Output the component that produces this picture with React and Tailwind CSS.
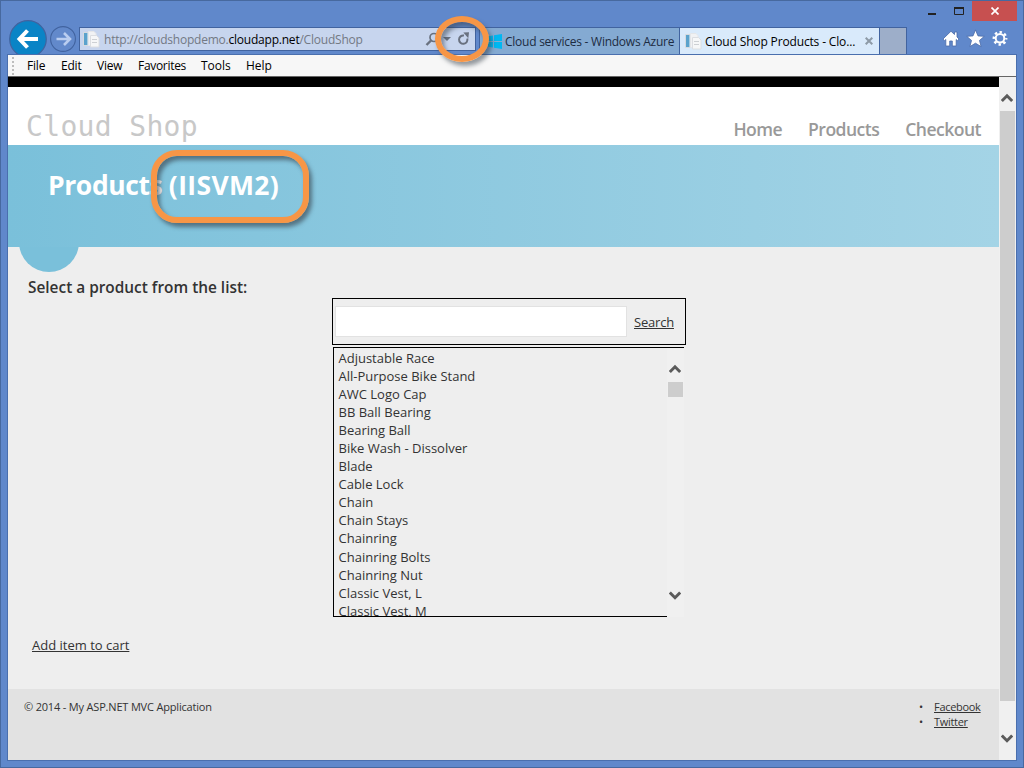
import React from "react";

const products = [
  "Adjustable Race",
  "All-Purpose Bike Stand",
  "AWC Logo Cap",
  "BB Ball Bearing",
  "Bearing Ball",
  "Bike Wash - Dissolver",
  "Blade",
  "Cable Lock",
  "Chain",
  "Chain Stays",
  "Chainring",
  "Chainring Bolts",
  "Chainring Nut",
  "Classic Vest, L",
  "Classic Vest, M",
];

function PageIcon() {
  return (
    <svg width="17" height="17" viewBox="0 0 17 17" className="shrink-0">
      <path d="M.5 1.500h7v13h-7z" fill="#f4f6f8" stroke="#d5dae0" />
      <path d="M1 2h3.500v12H1z" fill="#5aa2cc" />
      <path d="M5.500.5h5.500l2 2v12H5.500z" fill="#f1f2f4" stroke="#e4e6e9" />
      <path d="M7.500 4.500h6l2.500 2.500v9H7.500z" fill="#f6f7f8" stroke="#dcdee2" />
      <path d="M9 8.500h5M9 11.500h5" stroke="#cdd0d4" />
    </svg>
  );
}

function Chevron({ down }) {
  return (
    <svg width="12" height="10" viewBox="0 0 12 10" className="mr-px shrink-0">
      <path
        d={down ? "M.8 1.500 6 6.700 11.200 1.500" : "M.8 8 6 2.800 11.200 8"}
        fill="none"
        stroke="#5b5b5b"
        strokeWidth="3"
      />
    </svg>
  );
}

function Toolbar() {
  return (
    <header className="flex h-[54px] shrink-0">
      <svg width="71" height="54" viewBox="0 0 71 54" className="ml-2 shrink-0">
        <circle cx="20" cy="39" r="18.300" fill="#0a84c6" stroke="#41639f" strokeWidth="1.200" />
        <path d="M30 39H12M19.500 30.500 11.500 39l8 8.500" fill="none" stroke="#fff" strokeWidth="4" />
        <circle cx="55" cy="39" r="12.400" fill="#6289cb" stroke="#41639f" strokeWidth="1.100" />
        <path d="M48.500 39H61M56 33l6 6-6 6" fill="none" stroke="#b9cdf0" strokeWidth="2.600" />
      </svg>
      <div className="mt-[27px] flex h-6 w-[397px] shrink-0 items-center border border-[#41639f] bg-[#c7d5ee] pl-[3px] text-[12px] tracking-[-0.220px] text-[#737984]">
        <PageIcon />
        <span className="ml-1 whitespace-pre pt-0.5">
          http://cloudshopdemo.<span className="text-black">cloudapp.net</span>/CloudShop
        </span>
        <svg width="50" height="18" viewBox="0 0 50 18" className="ml-auto shrink-0">
          <circle cx="9" cy="7.500" r="4" fill="none" stroke="#69717f" strokeWidth="1.700" />
          <path d="M6 10.500 1.500 15" stroke="#69717f" strokeWidth="2.400" />
          <path d="M18 7h8l-4 4z" fill="#69717f" />
          <path d="M39 5.500A4.200 4.200 0 1 0 42.300 8.500" fill="none" stroke="#69717f" strokeWidth="2" />
          <path d="M38.300 2.600 44 2.300 43.300 8.300z" fill="#69717f" />
        </svg>
      </div>
      <div className="ml-[3px] mt-[27px] flex h-[27px] w-[201px] shrink-0 items-center border border-b-0 border-[#41639f] bg-[#84aad2] pl-2 text-[12px] tracking-[-0.250px] text-[#1d2c42]">
        <svg width="14" height="15" viewBox="0 0 14 15" className="shrink-0 fill-[#00b7f1]">
          <path d="M0 2.200 5 1.400V7H0zM6 1.200 14 0v7H6zM0 8h5v5.600l-5-.8zM6 8h8v7l-8-1.200z" />
        </svg>
        <span className="ml-[3px] whitespace-pre pt-0.5">Cloud services - Windows Azure</span>
      </div>
      <div className="-ml-px mt-[27px] flex h-[27px] w-[201px] shrink-0 items-center border border-b-0 border-[#41639f] bg-[#d9eafb] pl-[5px] text-[12px] tracking-[-0.150px] text-black">
        <PageIcon />
        <span className="ml-[3px] whitespace-pre pt-0.5">Cloud Shop Products - Clo...</span>
        <svg width="8" height="8" viewBox="0 0 8 8" className="ml-auto mr-1.5 shrink-0">
          <path d="M.7.7l6.600 6.600M7.300.7.7 7.300" stroke="#8d9aa6" strokeWidth="2" />
        </svg>
      </div>
      <div className="mt-[27px] h-[27px] w-[27px] shrink-0 border border-b-0 border-l-0 border-[#41639f] bg-[#9daec9]" />
      <div className="flex w-[110px] shrink-0 flex-col">
        <div className="mt-px flex h-5 justify-end">
          <svg width="65" height="20" viewBox="0 0 65 20">
            <path d="M21 12h8v2h-8z" fill="#222" />
            <path d="M47.500 7.500h9v6h-9z" fill="none" stroke="#222" />
            <path d="M47 6h10v2H47z" fill="#222" />
          </svg>
          <div className="flex h-5 w-[45px] items-center justify-center bg-[#c75050]">
            <svg width="8" height="8" viewBox="0 0 8 8">
              <path d="M.5.5l7 7M7.500.5l-7 7" stroke="#fff" strokeWidth="1.700" />
            </svg>
          </div>
        </div>
        <svg width="110" height="33" viewBox="0 0 110 33">
          <g fill="#fff" stroke="#4a6ba8" strokeWidth=".8">
            <path d="M44 10.200 36 18l1.500 1.700 1.300-1.200V25h3.900v-5h2.600v5h3.900v-6.500l1.300 1.200L52 18l-2-2V11h-2.500V13.500z" />
            <path d="M68.500 8.900 71 14.900l6.300.4-4.800 4.100 1.600 6.200-5.600-3.400-5.600 3.400 1.600-6.200-4.800-4.100 6.300-.4z" />
          </g>
          <g fill="none" stroke="#fff">
            <circle cx="93" cy="17.300" r="4.300" strokeWidth="2" />
            <circle cx="93" cy="17.300" r="6.200" strokeWidth="2.400" strokeDasharray="2.440 2.430" strokeDashoffset="1.220" />
          </g>
        </svg>
      </div>
    </header>
  );
}

function MenuBar() {
  return (
    <nav className="flex h-[23px] shrink-0 items-center border-b border-t border-b-[#666] border-t-[#4a6fae] bg-[#f7f7f7] text-[12px] text-black">
      <svg width="19" height="21" viewBox="0 0 19 21" className="shrink-0">
        <path d="M5 2v19" stroke="#bdbdbd" strokeWidth="2" strokeDasharray="2 2" />
      </svg>
      <span className="w-[34px] tracking-[-0.200px]">File</span>
      <span className="w-9 tracking-[-0.200px]">Edit</span>
      <span className="w-[41px] tracking-[-0.200px]">View</span>
      <span className="w-[63px] tracking-[-0.300px]">Favorites</span>
      <span className="w-[45px]">Tools</span>
      <span>Help</span>
    </nav>
  );
}

function ShopPage() {
  return (
    <main className="flex w-[991px] shrink-0 flex-col bg-[#eee] text-[#333]">
      <div className="h-2.5 shrink-0 bg-black" />
      <div className="flex h-[58px] shrink-0 items-end justify-between bg-white pl-[18px] pr-[18px]">
        <span className="pb-px font-['DejaVu_Sans_Mono',monospace] text-[28px] leading-[34px] tracking-[0.340px] text-[#c8c8c8]">
          Cloud Shop
        </span>
        <div className="flex gap-[26px] pb-1 text-[17.600px] font-semibold leading-6 tracking-[-0.550px] text-[#999]">
          <span>Home</span>
          <span>Products</span>
          <span>Checkout</span>
        </div>
      </div>
      <section className="relative h-[102px] shrink-0 bg-linear-to-r from-[#7ac0da] to-[#a4d4e6]">
        <h1 className="flex pl-10 pt-[22px] text-[26.500px] font-bold leading-9 text-white">
          <span className="whitespace-pre tracking-[-0.400px]">Products </span>
          <span className="tracking-[0.350px]">(IISVM2)</span>
        </h1>
        <div className="absolute left-[11px] top-[67px] size-[60px] rounded-full bg-[#7ac0da] [clip-path:inset(35px_0_0_0)]" />
        <div className="absolute left-[143px] top-[5px] h-[73px] w-[158px] rounded-[26px] border-[6px] border-[#f79646] shadow-[3px_4px_4px_rgba(50,60,70,0.6),inset_3px_4px_4px_rgba(50,60,70,0.6)]" />
      </section>
      <section className="flex grow flex-col">
        <h3 className="mt-[31px] pl-5 text-[15.400px] font-semibold leading-5">Select a product from the list:</h3>
        <div className="ml-[324px] flex h-[47px] w-[354px] items-center border border-black pl-0.5">
          <div className="h-[31px] w-[292px] border border-[#e2e2e2] bg-white" />
          <a className="ml-[7px] pt-0.5 text-[13px] tracking-[-0.200px] underline underline-offset-1">Search</a>
        </div>
        <div className="ml-[325px] mt-0.5 flex h-[270px] w-[351px]">
          <ul className="w-[334px] overflow-hidden border-y border-l border-black pl-[4.500px] pt-[1px] text-[13px] leading-[18.040px]">
            {products.map((p) => (
              <li key={p}>{p}</li>
            ))}
          </ul>
          <div className="flex w-[17px] flex-col items-center border-t border-black bg-[#f0f0f0] pb-4 pt-4">
            <Chevron />
            <div className="mt-2 h-[15px] w-[15px] bg-[#cdcdcd]" />
            <div className="mt-auto flex">
              <Chevron down />
            </div>
          </div>
        </div>
        <a className="ml-6 mt-[18px] text-[13px] leading-5 underline underline-offset-1">Add item to cart</a>
      </section>
      <footer className="flex h-[71px] shrink-0 justify-between bg-[#e2e2e2] pl-4 pr-[18px] pt-2.5 text-[11px] leading-[15px]">
        <span className="tracking-[-0.180px]">© 2014 - My ASP.NET MVC Application</span>
        <ul className="w-[62px] tracking-[-0.300px]">
          {["Facebook", "Twitter"].map((name) => (
            <li key={name} className="flex">
              <span className="w-[15px]">•</span>
              <a className="underline underline-offset-1">{name}</a>
            </li>
          ))}
        </ul>
      </footer>
    </main>
  );
}

export default function App() {
  return (
    <div className="relative flex h-[768px] w-[1024px] flex-col overflow-hidden bg-[#6088cb] font-['Open_Sans','Noto_Sans',sans-serif] shadow-[inset_0_0_0_1px_#47699f]">
      <Toolbar />
      <div className="mx-[7px] flex h-[707px] shrink-0 flex-col border-x border-b border-[#4a6fae]">
        <MenuBar />
        <div className="flex grow">
          <ShopPage />
          <div className="flex grow flex-col items-center bg-[#f0f0f0] pb-4 pt-4">
            <Chevron />
            <div className="mt-2 h-[590px] w-[15px] bg-[#cdcdcd]" />
            <div className="mt-auto flex">
              <Chevron down />
            </div>
          </div>
        </div>
      </div>
      <div className="absolute left-[435px] top-4 h-[46px] w-[54px] rounded-[50%] border-[6px] border-[#f79646] shadow-[3px_4px_4px_rgba(50,60,70,0.5),inset_3px_4px_4px_rgba(50,60,70,0.5)]" />
    </div>
  );
}
